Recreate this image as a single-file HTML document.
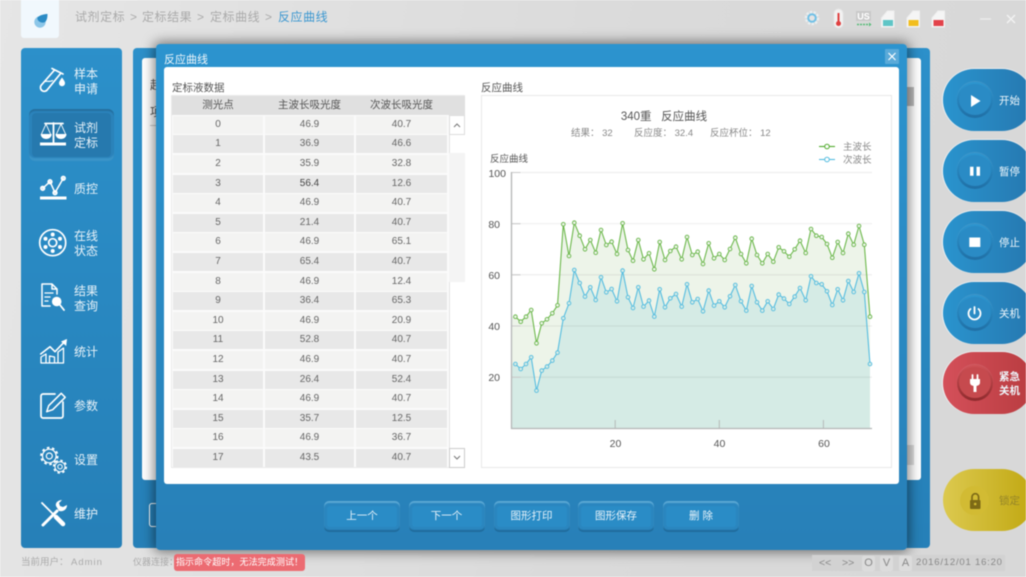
<!DOCTYPE html>
<html lang="zh"><head><meta charset="utf-8"><title>反应曲线</title>
<style>
*{box-sizing:border-box}
html,body{margin:0;padding:0;width:1026px;height:577px;overflow:hidden}
body{font-family:"Liberation Sans","Noto Sans CJK SC",sans-serif;position:relative}
#w{position:absolute;left:0;top:0;width:1026px;height:577px;overflow:hidden;background:linear-gradient(100deg,#e6e6e6,#dadada 60%,#d8d8d8);filter:blur(.45px)}
.a{position:absolute;white-space:nowrap}
.bc{top:9px;font-size:12px;letter-spacing:.55px;color:#aaa;line-height:16px}
.side{left:21px;top:48px;width:101px;height:500px;border-radius:4px;background:linear-gradient(#2c90ca,#2680b8)}
.nav{left:74px;color:#e6f1f8;font-size:12px;line-height:14.5px}
.rb{left:943px;width:90px;height:62px;border-radius:31px;background:linear-gradient(90deg,#2a94ce,#2678b0);box-shadow:-1px 0 0 #eef2f4,0 -1px 0 #e8eaec}
.rb i{position:absolute;left:14px;top:13px;width:36px;height:36px;border-radius:50%;background:linear-gradient(#2d96d0,#206fa5);box-shadow:0 -1px 1px rgba(255,255,255,.12)}
.rb i:after{content:"";position:absolute;left:2px;top:1.500px;width:32px;height:31px;border-radius:50%;background:#2a8bc5}
.rb b{position:absolute;left:56px;top:25px;font-weight:400;font-size:10.5px;line-height:14px;color:#eef6fb}
.rb svg{position:absolute;left:14px;top:13px;z-index:2}
.red{background:linear-gradient(90deg,#d4505a,#b93c40)}
.red i{background:linear-gradient(#cf5257,#8e2a2d)}
.red i:after{background:#c64a4e}
.ye{background:linear-gradient(90deg,#dcc94f,#c1a812);box-shadow:none}
.ye i{background:#d2bb33;left:17px;top:17px;width:29px;height:29px;box-shadow:none}
.ye i:after{display:none}
.dlg{left:156px;top:44px;width:751px;height:506px;border-radius:4px;background:linear-gradient(#2c94cf,#2880b8);box-shadow:0 0 12px 2px rgba(0,0,0,.5)}
.body{left:164px;top:67px;width:735px;height:417px;border-radius:3px;background:#fff}
.hd{top:95.5px;height:19px;background:#e0e0e0;font-size:10.5px;line-height:19px;color:#555;text-align:center}
.row{left:173px;width:274px;height:18px;font-size:10px;line-height:18.500px;color:#666;text-align:center}
.row span{position:absolute;top:0;height:18px}
.row span:nth-child(1){left:0;width:90px}
.row span:nth-child(2){left:92px;width:89px}
.row span:nth-child(3){left:183px;width:91px}
.o span{background:#f3f3f2}.e span{background:#e8e8e8}
.btn{top:501px;width:76px;height:31px;border-radius:5px;background:#2a86bf;box-shadow:inset 0 2px 1px #5ba8d4,inset 0 -2px 1px #206b9c}
.btn span{position:absolute;left:3px;top:5px;width:70px;height:21px;border-radius:3px;background:#2a8cc6;color:#e8f3fa;font-size:10.5px;line-height:21px;text-align:center}
.st{top:556px;font-size:9.5px;line-height:13px;color:#aaa}
.k{top:555.5px;height:15px;width:13px;border-radius:2px;background:#dcdcdc;color:#888;font-size:11px;line-height:15px;text-align:center}
text{font-family:"Liberation Sans","Noto Sans CJK SC",sans-serif}
</style></head><body><div id="w">

<!-- logo -->
<div class="a" style="left:21px;top:0;width:38px;height:38px;background:#f1f8fd;border-radius:0 0 3px 3px"></div>
<svg class="a" style="left:30px;top:8px" width="22" height="22" viewBox="0 0 22 22"><circle cx="10" cy="14" r="5.700" fill="#8cc6e8"/><path d="M7.500 9.500C10 7 14 6 17.500 6c0 3-.5 6.500-2.500 8-3 2-8.500-1-7.500-4.500z" fill="#2b8bc5"/></svg>

<!-- breadcrumbs -->
<div class="a bc" style="left:75px">试剂定标</div>
<div class="a bc" style="left:130px">&gt;</div>
<div class="a bc" style="left:142px">定标结果</div>
<div class="a bc" style="left:197px">&gt;</div>
<div class="a bc" style="left:210px">定标曲线</div>
<div class="a bc" style="left:265px">&gt;</div>
<div class="a bc" style="left:278px;color:#3b97d0">反应曲线</div>

<!-- top icons -->
<svg class="a" style="left:800px;top:0" width="226" height="40" viewBox="800 0 226 40">
<circle cx="812" cy="18" r="5.500" fill="none" stroke="#e9eef0" stroke-width="3.500" stroke-dasharray="2.200 1.200"/>
<circle cx="812" cy="18" r="3.800" fill="#e4e4e4" stroke="#6fc0e6" stroke-width="2"/>
<rect x="834" y="9" width="9" height="19" rx="4.500" fill="#f2f2f2" stroke="#e6e6e6"/>
<path d="M838.500 13v9" stroke="#e04040" stroke-width="2"/><circle cx="838.500" cy="23.500" r="2.500" fill="#e04040"/>
<rect x="856" y="11" width="15" height="10" fill="#c9c9c9"/>
<text x="863.500" y="19.500" font-size="9" font-weight="700" fill="#fff" text-anchor="middle">US</text>
<path d="M857 24.500h13" stroke="#55bb77" stroke-width="1.600" stroke-dasharray="2 1"/><path d="M869 22.500l2.500 2-2.500 2z" fill="#55bb77"/>
<g>
<path d="M881.500 18l6-7h6.500v16h-12.500z" fill="#f5f5f5" stroke="#efefef"/><rect x="883" y="20" width="10" height="6" fill="#5fc5c6"/>
<path d="M907 18l6-7h6.500v16H907z" fill="#f5f5f5" stroke="#efefef"/><rect x="908.500" y="20" width="10" height="6" fill="#f2be1e"/>
<path d="M932 18l6-7h6.500v16H932z" fill="#f5f5f5" stroke="#efefef"/><rect x="933.500" y="20" width="10" height="6" fill="#e2424a"/>
</g>
<path d="M980 19h11" stroke="#ededed" stroke-width="1.200"/>
<path d="M1007 15l8 8M1015 15l-8 8" stroke="#f3f3f3" stroke-width="1.300"/>
</svg>

<!-- sidebar -->
<div class="a side"></div>
<div class="a" style="left:29px;top:109px;width:85px;height:52px;border-radius:6px;background:#2b83bb;box-shadow:inset 0 2px 1px #246f9f,inset 0 -3px 1px #3a94c8"></div>
<div class="a" style="left:32px;top:113px;width:79px;height:44px;border-radius:4px;background:#2679ae"></div>
<div class="a nav" style="top:67px">样本<br>申请</div>
<div class="a nav" style="top:121px">试剂<br>定标</div>
<div class="a nav" style="top:182px">质控</div>
<div class="a nav" style="top:229px">在线<br>状态</div>
<div class="a nav" style="top:284px">结果<br>查询</div>
<div class="a nav" style="top:345px">统计</div>
<div class="a nav" style="top:399px">参数</div>
<div class="a nav" style="top:453px">设置</div>
<div class="a nav" style="top:507px">维护</div>

<svg class="a" style="left:30px;top:55px" width="50" height="490" viewBox="30 55 50 490" fill="none" stroke="#fff" stroke-width="1.700" stroke-linejoin="round" stroke-linecap="round">
<!-- tube -->
<path d="M52 68.500l11 5.500M54.500 70L41 85.500a3.800 3.800 0 0 0 6.500 4L61 73"/><path d="M44.500 81.500c3-1 5 1 8-1" stroke-width="1.200"/>
<path d="M62 77.500c2 3 3 4 3 5.800a3 3 0 0 1-6 0c0-1.800 1-2.800 3-5.800z" fill="#fff" stroke="none"/>
<!-- scales -->
<path d="M45 123.500h18M53.500 123v20" stroke-width="1.800"/>
<path d="M40 144h26" stroke-width="3" stroke-linecap="butt"/>
<path d="M40.700 134h11c0 3-2.500 5-5.500 5s-5.500-2-5.500-5zM55.500 134h11c0 3-2.500 5-5.500 5s-5.500-2-5.500-5z" fill="#fff" stroke="none"/>
<path d="M46 124l-4.500 10M46 124l4.500 10M61 124l-4.500 10M61 124l4.500 10" stroke-width=".9"/>
<!-- control chart -->
<path d="M42.700 188.300l7.300-6.600 5 11 8.300-14.400" stroke-width="1.500"/>
<circle cx="42.700" cy="188.300" r="1.800"/><circle cx="50" cy="181.700" r="1.800"/><circle cx="55" cy="192.700" r="1.800"/><circle cx="63.300" cy="178.300" r="1.800"/>
<path d="M40 198h26.500" stroke-width="3" stroke-linecap="butt"/>
<!-- status -->
<circle cx="52.700" cy="242.700" r="13"/><circle cx="52.700" cy="242.700" r="4"/>
<g fill="#fff" stroke="none"><circle cx="52.700" cy="234.500" r="2"/><circle cx="52.700" cy="251" r="2"/><circle cx="45.500" cy="238.700" r="2"/><circle cx="60" cy="238.700" r="2"/><circle cx="45.500" cy="247" r="2"/><circle cx="60" cy="247" r="2"/></g>
<!-- doc search -->
<path d="M50 306h-8v-22h10l5 5v5M52 284v5h5" stroke-width="1.500"/><path d="M45 293h8M45 297h5M45 301h3" stroke-width="1.300"/>
<circle cx="56.700" cy="301.500" r="4.800" fill="#fff" stroke="none"/><path d="M60 305l4 5" stroke-width="1.800"/>
<!-- stats -->
<path d="M40.700 354l9.300-7.300 5 5 11-11.500" stroke-width="1.600"/><path d="M67 339l-.8 7-5.200-4.500z" fill="#fff" stroke="none"/>
<path d="M41 363v-6l5-3v9zM49.500 363v-7l5 1v6zM58 363v-11l5.500-4v15zM41 363h22.500" stroke-width="1.300"/>
<!-- edit -->
<path d="M63 402v14a2 2 0 0 1-2 2H43a2 2 0 0 1-2-2v-20a2 2 0 0 1 2-2h12"/>
<path d="M46.700 411.700l2-6 12.500-12.400 4 4-12.500 12.400z" stroke-width="1.500"/>
<!-- gears -->
<circle cx="49.300" cy="456" r="8.300" stroke-width="1.800" stroke-dasharray="2.600 2.600" stroke-linecap="butt"/><circle cx="49.300" cy="456" r="6.800" stroke-width="1.200"/><circle cx="49.300" cy="456" r="3" stroke-width="1.200"/>
<circle cx="60" cy="466.700" r="6.300" stroke-width="1.600" stroke-dasharray="2.480 2.480" stroke-linecap="butt"/><circle cx="60" cy="466.700" r="5" stroke-width="1"/><circle cx="60" cy="466.700" r="2.200" stroke-width="1"/>
<!-- tools -->
<path d="M42 503l14 14" stroke-width="1.800"/><path d="M56 517l7 7" stroke-width="4.500"/>
<path d="M43 525l14-14" stroke-width="3"/>
<path d="M67 505c0 4-3 7-8 6l-3-5c-1-3 2-6 6-6l-3 3 1 3 3 1z" fill="#fff" stroke="none"/>
</svg>

<!-- panel behind -->
<div class="a" style="left:133px;top:48px;width:797px;height:500px;border-radius:4px;background:linear-gradient(#2c90ca,#2680b8)"></div>
<div class="a" style="left:142px;top:58px;width:779px;height:422px;border-radius:3px;background:#fff"></div>
<div class="a" style="left:150px;top:77px;font-size:12px;line-height:16px;color:#555">起</div>
<div class="a" style="left:150px;top:104px;font-size:12px;line-height:16px;color:#555">项</div>
<div class="a" style="left:150px;top:125px;width:10px;height:1px;background:#ccc"></div>
<div class="a" style="left:905px;top:87px;width:9px;height:19px;background:#bbb"></div>
<div class="a" style="left:905px;top:445px;width:9px;height:20px;background:#ddd"></div>
<div class="a" style="left:149px;top:503px;width:14px;height:24px;border:1.500px solid #fff;border-radius:3px"></div>

<!-- dialog -->
<div class="a dlg"></div>
<div class="a" style="left:164px;top:52px;font-size:11px;line-height:15px;color:#f0f7fb;padding-top:1px">反应曲线</div>
<div class="a" style="left:885px;top:49px;width:14px;height:15px;border-radius:1px;background:#5aaad9"></div>
<svg class="a" style="left:885px;top:49px" width="14" height="15"><path d="M3.500 4l7 7M10.500 4l-7 7" stroke="#fff" stroke-width="1.200"/></svg>
<div class="a body"></div>

<div class="a" style="left:172px;top:81px;font-size:10.500px;line-height:14px;color:#555">定标液数据</div>
<div class="a" style="left:481px;top:81px;font-size:10.500px;line-height:14px;color:#555">反应曲线</div>

<!-- table -->
<div class="a" style="left:171px;top:95px;width:294px;height:373px;background:#fbfbfb;border:1px solid #eaeaea"></div>
<div class="a hd" style="left:171.500px;width:293px"></div>
<div class="a hd" style="left:173px;width:90px">测光点</div>
<div class="a hd" style="left:265px;width:89px">主波长吸光度</div>
<div class="a hd" style="left:356px;width:91px">次波长吸光度</div>

<div class="a row o" style="top:115.700px"><span>0</span><span>46.9</span><span>40.7</span></div>
<div class="a row e" style="top:135.300px"><span>1</span><span>36.9</span><span>46.6</span></div>
<div class="a row o" style="top:154.900px"><span>2</span><span>35.9</span><span>32.8</span></div>
<div class="a row e" style="top:174.500px"><span>3</span><span style="color:#444">56.4</span><span>12.6</span></div>
<div class="a row o" style="top:194.100px"><span>4</span><span>46.9</span><span>40.7</span></div>
<div class="a row e" style="top:213.700px"><span>5</span><span>21.4</span><span>40.7</span></div>
<div class="a row o" style="top:233.300px"><span>6</span><span>46.9</span><span>65.1</span></div>
<div class="a row e" style="top:252.900px"><span>7</span><span>65.4</span><span>40.7</span></div>
<div class="a row o" style="top:272.500px"><span>8</span><span>46.9</span><span>12.4</span></div>
<div class="a row e" style="top:292.100px"><span>9</span><span>36.4</span><span>65.3</span></div>
<div class="a row o" style="top:311.700px"><span>10</span><span>46.9</span><span>20.9</span></div>
<div class="a row e" style="top:331.300px"><span>11</span><span>52.8</span><span>40.7</span></div>
<div class="a row o" style="top:350.900px"><span>12</span><span>46.9</span><span>40.7</span></div>
<div class="a row e" style="top:370.500px"><span>13</span><span>26.4</span><span>52.4</span></div>
<div class="a row o" style="top:390.100px"><span>14</span><span>46.9</span><span>40.7</span></div>
<div class="a row e" style="top:409.700px"><span>15</span><span>35.7</span><span>12.5</span></div>
<div class="a row o" style="top:429.300px"><span>16</span><span>46.9</span><span>36.7</span></div>
<div class="a row e" style="top:448.900px"><span>17</span><span>43.5</span><span>40.7</span></div>

<!-- scrollbar -->
<div class="a" style="left:449px;top:115px;width:16px;height:353px;background:#fff;border-left:1px solid #e4e4e4"></div>
<div class="a" style="left:449px;top:153px;width:16px;height:129px;background:#f4f4f4"></div>
<svg class="a" style="left:449px;top:115px" width="16" height="353" fill="none"><rect x=".5" y=".5" width="15" height="19" fill="#fff" stroke="#ddd"/><rect x=".5" y="333.500" width="15" height="19" fill="#fff" stroke="#ccc"/><path d="M5 12l3-3 3 3" stroke="#777"/><path d="M5 341l3 3 3-3" stroke="#777"/></svg>

<!-- chart card -->
<div class="a" style="left:481px;top:95px;width:411px;height:373px;background:#fff;border:1px solid #e8e8e8"></div>
<svg class="a" style="left:481px;top:95px" width="411" height="373" viewBox="481 95 411 373">
<defs>
<marker id="mg" viewBox="0 0 6 6" refX="3" refY="3" markerWidth="5" markerHeight="5" markerUnits="userSpaceOnUse"><circle cx="3" cy="3" r="2.200" fill="#edf4e9" stroke="#69b64a" stroke-width="1.100"/></marker>
<marker id="mb" viewBox="0 0 6 6" refX="3" refY="3" markerWidth="5" markerHeight="5" markerUnits="userSpaceOnUse"><circle cx="3" cy="3" r="2.200" fill="#d5ebe5" stroke="#55bde0" stroke-width="1.100"/></marker>
</defs>
<text x="664" y="120" font-size="11.500" fill="#555" text-anchor="middle" xml:space="preserve">340重   反应曲线</text>
<g font-size="9.500" fill="#888">
<text x="571" y="136">结果： 32</text>
<text x="634" y="136">反应度： 32.4</text>
<text x="710" y="136">反应杯位： 12</text>
<text x="843" y="150">主波长</text>
<text x="843" y="163">次波长</text>
</g>
<path d="M819 146.500h16" stroke="#52ab2e" stroke-width="1.100"/><circle cx="827" cy="146.500" r="2.300" fill="#fff" stroke="#52ab2e"/>
<path d="M819 159.500h16" stroke="#55bde0" stroke-width="1.100"/><circle cx="827" cy="159.500" r="2.300" fill="#fff" stroke="#55bde0"/>
<text x="490" y="162" font-size="9.500" fill="#555">反应曲线</text>
<g font-size="10.500" fill="#555" text-anchor="end">
<text x="506" y="177">100</text><text x="500" y="228">80</text><text x="500" y="279">60</text><text x="500" y="330">40</text><text x="500" y="381">20</text>
</g>
<g font-size="10.500" fill="#555" text-anchor="middle"><text x="615.500" y="447">20</text><text x="719.500" y="447">40</text><text x="824" y="447">60</text></g>

<path d="M511.500 172.500H872M511.500 223.700H872" stroke="#efefef" stroke-width="1.200"/>
<polygon fill="#edf4e9" points="511.500,316.700 515.400,316.700 520.700,321.700 526,316.700 531.200,310 536.500,343.300 541.700,323.300 547,319.300 552.300,313.300 557.500,305.300 563.300,224.300 569,256 574.300,222.700 579.700,235.700 585,249.300 590.300,240 595.700,252.700 601,230 606.300,245 611.600,241.700 617,254 622.600,223.300 628,250 633,260.700 638.300,240 643.500,259.300 649,253.300 654.300,269.300 659.700,242 665,260 670.300,251 676,246.700 681.700,259.300 687,237 692.300,255 697.700,251.700 703,264 708.700,243.300 714,258.300 719.300,254 724.700,260 730,249 735.300,237.700 741,254 746.300,263.300 751.700,238.700 757,255 762.300,263.300 767.700,254 773.300,261.700 778.700,247.300 784,251.300 789.300,256.700 794.700,249.300 800,240.700 805.700,253 811,229 816.300,235.700 821.700,237 827,244 832.300,257.700 837.700,242 843,253 848.300,233.700 853.700,244.700 859,226 864.300,244.700 870,316.700 870,428 511.500,428"/>
<polygon fill="#d5ebe5" points="511.500,364 515.400,364 520.700,369 526,364 531.200,357.300 536.500,390.600 541.700,370.600 547,366.600 552.300,360.600 557.500,352.600 563.300,318.300 569,303.300 574.300,270 579.700,283 585,296.600 590.300,287.300 595.700,300 601,277.300 606.300,292.300 611.600,289 617,301.300 622.600,270.600 628,297.300 633,308 638.300,287.300 643.500,306.600 649,300.600 654.300,316.600 659.700,289.300 665,307.300 670.300,298.300 676,294 681.700,306.600 687,284.300 692.300,302.300 697.700,299 703,311.300 708.700,290.600 714,305.600 719.300,301.300 724.700,307.300 730,296.300 735.300,285 741,301.300 746.300,310.600 751.700,286 757,302.300 762.300,310.600 767.700,301.300 773.300,309 778.700,294.600 784,298.600 789.300,304 794.700,296.600 800,288 805.700,300.300 811,276.300 816.300,283 821.700,284.300 827,291.300 832.300,305 837.700,289.300 843,300.300 848.300,281 853.700,292 859,273.300 864.300,292 870,364 870,428 511.500,428"/>
<path d="M511.500 274.800H872M511.500 326H872M511.500 377.200H872" stroke="#000" stroke-opacity=".07" stroke-width="1.100"/>
<path d="M511.500 172.500h9M511.500 223.700h9M511.500 274.800h9M511.500 326h9M511.500 377.200h9" stroke="#ccc" stroke-width="1.100"/>
<path d="M615.200 420v8M719.300 420v8M823.400 420v8" stroke="#b5b9b8" stroke-width="1"/>
<path d="M511.500 172v256.500H872" fill="none" stroke="#b4b6b6" stroke-width="1.300"/>
<polyline fill="none" stroke="#6cb84b" stroke-width="1.100" stroke-linejoin="round" marker-start="url(#mg)" marker-mid="url(#mg)" marker-end="url(#mg)" points="515.400,316.700 520.700,321.700 526,316.700 531.200,310 536.500,343.300 541.700,323.300 547,319.300 552.300,313.300 557.500,305.300 563.300,224.300 569,256 574.300,222.700 579.700,235.700 585,249.300 590.300,240 595.700,252.700 601,230 606.300,245 611.600,241.700 617,254 622.600,223.300 628,250 633,260.700 638.300,240 643.500,259.300 649,253.300 654.300,269.300 659.700,242 665,260 670.300,251 676,246.700 681.700,259.300 687,237 692.300,255 697.700,251.700 703,264 708.700,243.300 714,258.300 719.300,254 724.700,260 730,249 735.300,237.700 741,254 746.300,263.300 751.700,238.700 757,255 762.300,263.300 767.700,254 773.300,261.700 778.700,247.300 784,251.300 789.300,256.700 794.700,249.300 800,240.700 805.700,253 811,229 816.300,235.700 821.700,237 827,244 832.300,257.700 837.700,242 843,253 848.300,233.700 853.700,244.700 859,226 864.300,244.700 870,316.700"/>
<polyline fill="none" stroke="#55bde0" stroke-width="1.100" stroke-linejoin="round" marker-start="url(#mb)" marker-mid="url(#mb)" marker-end="url(#mb)" points="515.400,364 520.700,369 526,364 531.200,357.300 536.500,390.600 541.700,370.600 547,366.600 552.300,360.600 557.500,352.600 563.300,318.300 569,303.300 574.300,270 579.700,283 585,296.600 590.300,287.300 595.700,300 601,277.300 606.300,292.300 611.600,289 617,301.300 622.600,270.600 628,297.300 633,308 638.300,287.300 643.500,306.600 649,300.600 654.300,316.600 659.700,289.300 665,307.300 670.300,298.300 676,294 681.700,306.600 687,284.300 692.300,302.300 697.700,299 703,311.300 708.700,290.600 714,305.600 719.300,301.300 724.700,307.300 730,296.300 735.300,285 741,301.300 746.300,310.600 751.700,286 757,302.300 762.300,310.600 767.700,301.300 773.300,309 778.700,294.600 784,298.600 789.300,304 794.700,296.600 800,288 805.700,300.300 811,276.300 816.300,283 821.700,284.300 827,291.300 832.300,305 837.700,289.300 843,300.300 848.300,281 853.700,292 859,273.300 864.300,292 870,364"/>
</svg>

<!-- dialog buttons -->
<div class="a btn" style="left:324px"><span>上一个</span></div>
<div class="a btn" style="left:408.500px"><span>下一个</span></div>
<div class="a btn" style="left:493.500px"><span>图形打印</span></div>
<div class="a btn" style="left:578px"><span>图形保存</span></div>
<div class="a btn" style="left:663px"><span>删 除</span></div>

<!-- right buttons -->
<div class="a rb" style="top:69px"><i></i><svg width="36" height="36"><path d="M14 13l9.500 6L14 25z" fill="#fff"/></svg><b>开始</b></div>
<div class="a rb" style="top:140px"><i></i><svg width="36" height="36"><path d="M13 13.700h3.500v9H13zM19.500 13.700H23v9h-3.500z" fill="#fff"/></svg><b>暂停</b></div>
<div class="a rb" style="top:211px"><i></i><svg width="36" height="36"><rect x="12.300" y="13.500" width="11" height="9.500" fill="#fff"/></svg><b>停止</b></div>
<div class="a rb" style="top:282px"><i></i><svg width="36" height="36" fill="none" stroke="#fff" stroke-width="1.800"><path d="M13.500 14a6 6 0 1 0 8 0" stroke-linecap="round"/><path d="M17.500 12v6.500" stroke-linecap="round"/></svg><b>关机</b></div>
<div class="a rb red" style="top:352px"><i></i><svg width="36" height="36"><path d="M15.500 10v4M20.500 10v4" stroke="#fff" stroke-width="1.800" stroke-linecap="round"/><path d="M13 14h10v3.500c0 2-1.500 3-3.500 3.500V27h-3v-6c-2-.5-3.500-1.500-3.500-3.500z" fill="#fff"/></svg><b style="top:18px;font-weight:700;line-height:14px">紧急<br>关机</b></div>
<div class="a rb ye" style="top:469px"><i></i><svg width="36" height="36" fill="none"><path d="M15 18v-3a3.300 3.300 0 0 1 6.600 0v3" stroke="#7d6a16" stroke-width="1.700"/><rect x="13" y="18" width="10.500" height="9" rx="1" fill="#7d6a16"/><circle cx="18.200" cy="22" r="1.300" fill="#d2bb33"/></svg><b style="color:#968628">锁定</b></div>

<!-- status bar -->
<div class="a st" style="left:21px">当前用户：</div>
<div class="a st" style="left:71px;letter-spacing:1px">Admin</div>
<div class="a st" style="left:133px;font-size:9px">仪器连接：</div>
<div class="a" style="left:174px;top:554px;width:131px;height:17px;border-radius:3px;background:#ec6b72;color:#fff;font-size:9.100px;line-height:17px;text-align:center">指示命令超时，无法完成测试！</div>
<div class="a" style="left:812px;top:555px;width:193px;height:16px;background:#d2d2d2"></div>
<div class="a" style="left:819px;top:556px;font-size:10.500px;line-height:14px;color:#888">&lt;&lt;</div>
<div class="a" style="left:842px;top:556px;font-size:10.500px;line-height:14px;color:#888">&gt;&gt;</div>
<div class="a k" style="left:862px">O</div>
<div class="a k" style="left:880px">V</div>
<div class="a k" style="left:899px">A</div>
<div class="a" style="left:916px;top:556px;font-size:9.500px;line-height:14px;color:#888;letter-spacing:.8px">2016/12/01 16:20</div>

</div></body></html>
